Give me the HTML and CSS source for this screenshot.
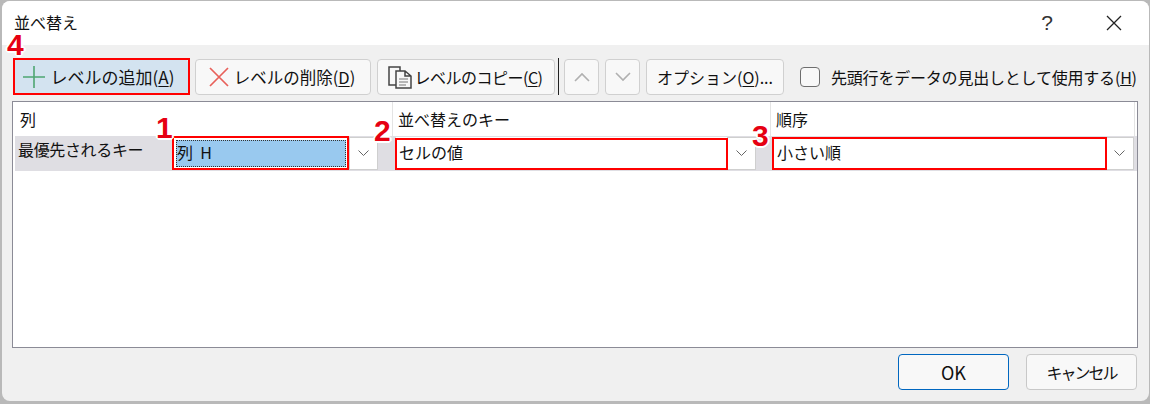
FILE: index.html
```html
<!DOCTYPE html>
<html lang="ja">
<head>
<meta charset="utf-8">
<title>並べ替え</title>
<link rel="stylesheet" href="styles.css">
</head>
<body>
<div class="dialog">
  <header class="titlebar">
    <span class="title">並べ替え</span>
    <span class="help">?</span>
    <svg class="close" width="16" height="16" viewBox="0 0 16 16"><path d="M1 1L15 15M15 1L1 15" stroke="#222" stroke-width="1.3" fill="none"/></svg>
  </header>
  <div class="body">
    <div class="toolbar">
      <button class="btn btn-add">
        <svg class="ico" width="24" height="24" viewBox="0 0 24 24"><path d="M12 1V23M1 12H23" stroke="#4ea672" stroke-width="1.6" fill="none"/></svg>
        <span>レベルの追加(<u>A</u>)</span>
      </button>
      <button class="btn btn-del">
        <svg class="ico" width="20" height="20" viewBox="0 0 20 20"><path d="M1 1L19 19M19 1L1 19" stroke="#e8605a" stroke-width="1.7" fill="none"/></svg>
        <span>レベルの削除(<u>D</u>)</span>
      </button>
      <button class="btn btn-copy">
        <svg class="ico" width="26" height="24" viewBox="0 0 26 24"><path d="M9 20H2V2H13V6" stroke="#444" stroke-width="1.5" fill="none"/><path d="M9 6H18L24 11V23H9Z M18 6V11H24" stroke="#444" stroke-width="1.5" fill="none"/><path d="M12 14H21M12 17H21M12 20H19" stroke="#777" stroke-width="1" fill="none"/></svg>
        <span>レベルのコピー(<u>C</u>)</span>
      </button>
      <span class="sep"></span>
      <button class="btn btn-arrow"><svg width="16" height="10" viewBox="0 0 16 10"><path d="M1 9L8 2L15 9" stroke="#b0b0b0" stroke-width="1.6" fill="none"/></svg></button>
      <button class="btn btn-arrow"><svg width="16" height="10" viewBox="0 0 16 10"><path d="M1 1L8 8L15 1" stroke="#b0b0b0" stroke-width="1.6" fill="none"/></svg></button>
      <button class="btn btn-opt"><span>オプション(<u>O</u>)...</span></button>
      <label class="check"><span class="box"></span><span class="check-text">先頭行をデータの見出しとして使用する(<u>H</u>)</span></label>
    </div>
    <div class="list">
      <div class="head">
        <div class="hcell hcell-a">列</div>
        <div class="hcell hcell-b">並べ替えのキー</div>
        <div class="hcell hcell-c">順序</div>
      </div>
      <div class="row">
        <div class="rowlabel">最優先されるキー</div>
        <div class="combo combo-a"><div class="field field-a"><span class="sel">列&nbsp; H</span></div><div class="drop"><svg width="11" height="7" viewBox="0 0 11 7"><path d="M.5 .5L5.500 5.500L10.500 .5" stroke="#666" fill="none"/></svg></div></div>
        <div class="combo combo-b"><div class="field">セルの値</div><div class="drop"><svg width="11" height="7" viewBox="0 0 11 7"><path d="M.5 .5L5.500 5.500L10.500 .5" stroke="#666" fill="none"/></svg></div></div>
        <div class="combo combo-c"><div class="field field-c">小さい順</div><div class="drop"><svg width="11" height="7" viewBox="0 0 11 7"><path d="M.5 .5L5.500 5.500L10.500 .5" stroke="#666" fill="none"/></svg></div></div>
      </div>
    </div>
    <div class="footer">
      <button class="btn btn-ok">OK</button>
      <button class="btn btn-cancel">キャンセル</button>
    </div>
  </div>
  <div class="mark mark-4"></div>
  <div class="mark mark-1"></div>
  <div class="mark mark-2"></div>
  <div class="mark mark-3"></div>
  <span class="num num-4">4</span>
  <span class="num num-1">1</span>
  <span class="num num-2">2</span>
  <span class="num num-3">3</span>
</div>
</body>
</html>
```
FILE: styles.css
```css
* { box-sizing: border-box; }
html, body { margin: 0; padding: 0; }
body {
  width: 1150px;
  height: 404px;
  overflow: hidden;
  background: #b9b9b9;
  font-family: "Noto Sans CJK JP", "Noto Sans", sans-serif;
  font-size: 16px;
  color: #111;
}
.dialog {
  position: relative;
  width: 1147px;
  height: 400px;
  margin: 1px 0 0 2px;
  background: #f0f0f0;
  border-radius: 8px;
  overflow: hidden;
}
.titlebar {
  height: 44px;
  background: #fff;
  display: flex;
  align-items: center;
  padding: 0 27px 0 12px;
}
.title { flex: 1; font-size: 16px; line-height: 20px; margin-bottom: 2px; }
.help {
  width: 20px;
  margin-right: 49px;
  font-family: "Liberation Sans", sans-serif;
  font-size: 21px;
  line-height: 22px;
  color: #333;
  text-align: center;
}
.body { padding: 13px 10px 0 10px; }
.toolbar { display: flex; align-items: center; height: 37px; margin-left: 2px; }
.btn {
  font: inherit;
  color: inherit;
  height: 36px;
  border: 1px solid #d0d0d0;
  border-radius: 4px;
  background: #f8f8f8;
  display: flex;
  align-items: center;
  justify-content: center;
  padding: 0;
  line-height: 20px;
  white-space: nowrap;
}
.btn u { text-underline-offset: 2px; }
.ico { flex: none; }
.btn-add { width: 174px; background: #d3e3f0; border-color: #d3e3f0; gap: 5px; font-size: 17px; padding-right: 6px; }
.btn-del { width: 176px; margin-left: 7px; gap: 5px; font-size: 16.5px; padding-right: 2px; }
.btn-copy { width: 178px; margin-left: 6px; gap: 1px; letter-spacing: -0.5px; padding-right: 2px; }
.sep { width: 1px; height: 37px; background: #222; margin: 0 5px 0 3px; }
.btn-arrow { width: 35px; margin-right: 6px; }
.btn-opt { width: 138px; }
.check { display: flex; align-items: center; margin-left: 16px; white-space: nowrap; }
.check-text { letter-spacing: -0.2px; }
.box {
  width: 20px; height: 20px;
  border: 1px solid #6e6e6e;
  border-radius: 4px;
  background: #f8f8f8;
  margin-right: 11px;
}
.list {
  margin-top: 6px;
  height: 247px;
  width: 1126px;
  background: #fff;
  border: 1px solid #8b8b96;
}
.head { display: flex; height: 34px; }
.hcell { line-height: 20px; padding-top: 7px; border-right: 1px solid #e4e4e4; padding-left: 5px; }
.hcell-a { width: 380px; padding-left: 7px; }
.hcell-b { width: 378px; }
.hcell-c { width: 364px; }
.row {
  display: flex;
  align-items: center;
  height: 35px;
  margin: 0 0 0 2px;
  width: 1122px;
  background: #dfdee3;
}
.rowlabel { width: 158px; padding: 0 0 10px 3px; line-height: 20px; white-space: nowrap; letter-spacing: -0.35px; }
.combo { display: flex; height: 33px; background: #fff; }
.combo-a { width: 205px; }
.combo-b { width: 360px; margin-left: 18px; }
.combo-c { width: 361px; margin-left: 17px; }
.field { flex: 1; display: flex; align-items: center; padding: 0 0 3px 2px; border: 1px solid #fff; }
.field-a { padding: 2px; }
.field-c { padding-left: 3px; }
.sel {
  display: block;
  width: 100%;
  height: 27px;
  line-height: 25px;
  background: #99c9ef;
  padding-left: 1px;
  outline: 1px dotted #333;
  outline-offset: -1px;
}
.drop {
  width: 29px;
  display: flex;
  align-items: center;
  justify-content: center;
  border: 1px solid #cfcfcf;
  background: #fff;
}
.footer { display: flex; justify-content: flex-end; gap: 17px; margin-top: 6px; padding-right: 2px; }
.btn-ok { width: 111px; border: 1px solid #0067c0; font-size: 18px; }
.btn-cancel { width: 111px; border-color: #c8c8c8; letter-spacing: -2px; }
.mark { position: absolute; border: 2px solid #ff0000; pointer-events: none; }
.mark-4 { left: 11px; top: 57px; width: 177px; height: 37px; }
.mark-1 { left: 170px; top: 135px; width: 177px; height: 34px; }
.mark-2 { left: 393px; top: 137px; width: 333px; height: 32px; }
.mark-3 { left: 770px; top: 136px; width: 335px; height: 33px; }
.num {
  position: absolute;
  font-family: "Liberation Sans", sans-serif;
  font-weight: 700;
  font-size: 30px;
  line-height: 22px;
  color: #e60012;
  text-shadow: 2px 0 #fff, -2px 0 #fff, 0 2px #fff, 0 -2px #fff, 1px 1px #fff, -1px -1px #fff, 1px -1px #fff, -1px 1px #fff;
}
.num-4 { left: 5px; top: 33px; }
.num-1 { left: 154px; top: 116px; }
.num-2 { left: 372px; top: 119px; }
.num-3 { left: 750px; top: 124px; }
```
